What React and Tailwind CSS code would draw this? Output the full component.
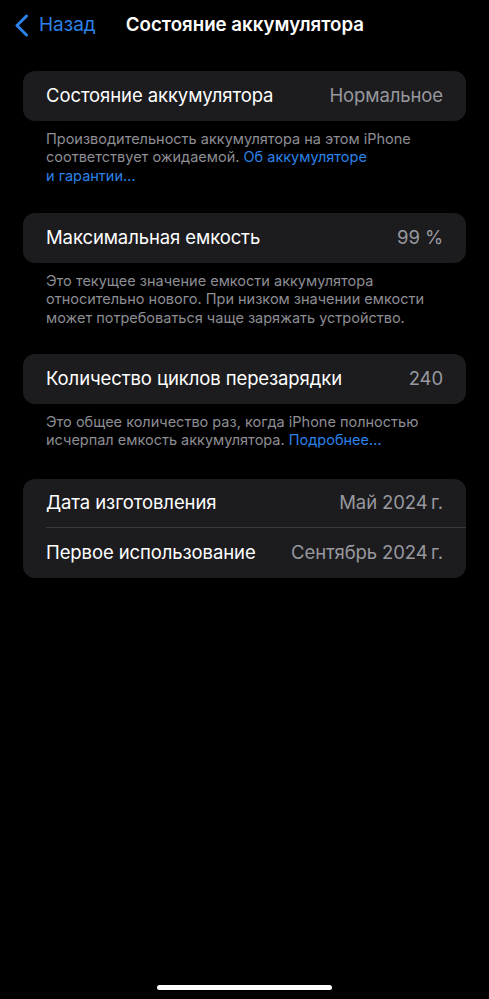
const Row = ({ label, value, divider }) => (
  <div className="flex items-center h-[49.5px] pl-[23px]">
    <div className={`flex items-center justify-between flex-1 h-full pr-[23px] ${divider ? 'border-b border-[#38383a]' : ''}`}>
      <span className="text-[18.5px] text-white tracking-[-0.1px]">{label}</span>
      <span className="text-[18.5px] text-[#98989e] tracking-[-0.1px]">{value}</span>
    </div>
  </div>
)

const Group = ({ children }) => (
  <div className="mx-[23px] rounded-[12px] bg-[#1c1c1e] overflow-hidden">{children}</div>
)

const Note = ({ children }) => (
  <p className="px-[46px] pr-[40px] pt-[9px] text-[14.5px] leading-[18.5px] text-[#8d8d93]">{children}</p>
)

const Link = ({ children }) => <span className="text-[#2b82e8]">{children}</span>

export default function App() {
  return (
    <div className="min-h-[999px] bg-black font-['Inter',sans-serif] flex flex-col">
      <div className="relative flex items-center h-[51px]">
        <div className="flex items-center pl-[14px] text-[#2b82e8]">
          <svg width="15" height="23" viewBox="0 0 15 23" fill="none">
            <path d="M12.5 2 L3 11.5 L12.5 21" stroke="currentColor" strokeWidth="3" strokeLinecap="round" strokeLinejoin="round" />
          </svg>
          <span className="ml-[10px] text-[19px]">Назад</span>
        </div>
        <span className="ml-[30px] text-[18.7px] font-semibold text-white">Состояние аккумулятора</span>
      </div>

      <div className="mt-[20px]">
        <Group>
          <Row label="Состояние аккумулятора" value="Нормальное" />
        </Group>
        <Note>
          Производительность аккумулятора на этом iPhone соответствует ожидаемой. <Link>Об аккумуляторе и&nbsp;гарантии…</Link>
        </Note>
      </div>

      <div className="mt-[28px]">
        <Group>
          <Row label="Максимальная емкость" value="99 %" />
        </Group>
        <Note>
          Это текущее значение емкости аккумулятора относительно нового. При низком значении емкости может потребоваться чаще заряжать устройство.
        </Note>
      </div>

      <div className="mt-[27px]">
        <Group>
          <Row label="Количество циклов перезарядки" value="240" />
        </Group>
        <Note>
          Это общее количество раз, когда iPhone полностью исчерпал емкость аккумулятора. <Link>Подробнее…</Link>
        </Note>
      </div>

      <div className="mt-[29px]">
        <Group>
          <Row label="Дата изготовления" value={'Май 2024\u202fг.'} divider />
          <Row label="Первое использование" value={'Сентябрь 2024\u202fг.'} />
        </Group>
      </div>

      <div className="flex-1" />
      <div className="flex justify-center pb-[9px]">
        <div className="w-[175px] h-[5px] rounded-full bg-white" />
      </div>
    </div>
  )
}
